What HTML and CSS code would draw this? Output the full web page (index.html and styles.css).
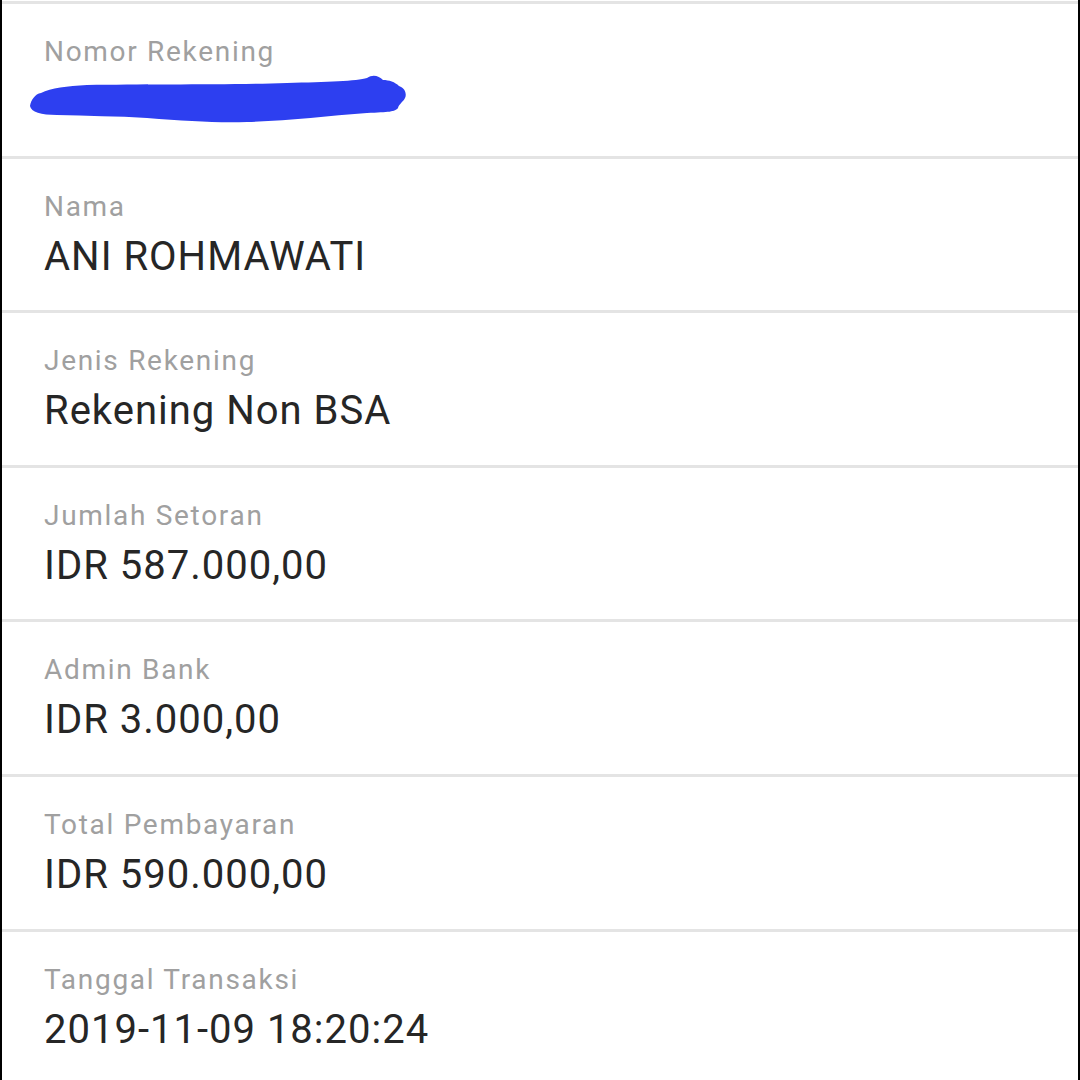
FILE: index.html
```html
<!DOCTYPE html>
<html lang="id">
<head>
<meta charset="utf-8">
<link rel="stylesheet" href="styles.css">
</head>
<body>
<div class="frame">
  <div class="row">
    <div class="label">Nomor Rekening</div>
    <div class="value value-redacted">
      <svg class="scribble" width="390" height="56" viewBox="0 0 390 56" xmlns="http://www.w3.org/2000/svg">
        <path d="M3 34 C4 28 8 22 14 21 C24 16 40 14 60 13 C120 12 200 13 260 11 C300 10 330 9 340 6 C346 2 352 4 356 8 C362 8 368 10 372 14 C378 16 380 22 378 26 C376 30 372 32 371 36 C368 40 362 40 340 41 C300 44 260 49 220 50 C190 51 160 49 120 46 C90 44 60 44 30 43 C14 43 4 40 3 34 Z" fill="#2d3ff0"/>
      </svg>
    </div>
  </div>
  <div class="row">
    <div class="label">Nama</div>
    <div class="value">ANI ROHMAWATI</div>
  </div>
  <div class="row">
    <div class="label">Jenis Rekening</div>
    <div class="value">Rekening Non BSA</div>
  </div>
  <div class="row">
    <div class="label">Jumlah Setoran</div>
    <div class="value">IDR 587.000,00</div>
  </div>
  <div class="row">
    <div class="label">Admin Bank</div>
    <div class="value">IDR 3.000,00</div>
  </div>
  <div class="row">
    <div class="label">Total Pembayaran</div>
    <div class="value">IDR 590.000,00</div>
  </div>
  <div class="row row-last">
    <div class="label">Tanggal Transaksi</div>
    <div class="value">2019-11-09 18:20:24</div>
  </div>
</div>
</body>
</html>
```

FILE: styles.css
```css
html, body {
  margin: 0;
  padding: 0;
  background: #000;
}

.frame {
  box-sizing: border-box;
  width: 1076px;
  height: 1080px;
  margin: 0 2px;
  padding-top: 1px;
  background: #fff;
  display: flex;
  flex-direction: column;
  font-family: Roboto, "Noto Sans", sans-serif;
  overflow: hidden;
}

.row {
  box-sizing: border-box;
  height: 154.6px;
  flex: 0 0 auto;
  border-top: 3px solid #e4e4e4;
  padding: 32px 0 0 42px;
  display: flex;
  flex-direction: column;
  gap: 10px;
}

.row-last {
  flex: 1 1 auto;
}

.label {
  font-size: 28px;
  line-height: 32px;
  color: #a0a0a0;
  letter-spacing: 1.7px;
}

.value {
  font-size: 40px;
  line-height: 48px;
  color: #262626;
  letter-spacing: 1px;
}

.value-redacted {
  height: 48px;
  position: relative;
}

.scribble {
  position: absolute;
  left: -17px;
  top: -6px;
}
```
